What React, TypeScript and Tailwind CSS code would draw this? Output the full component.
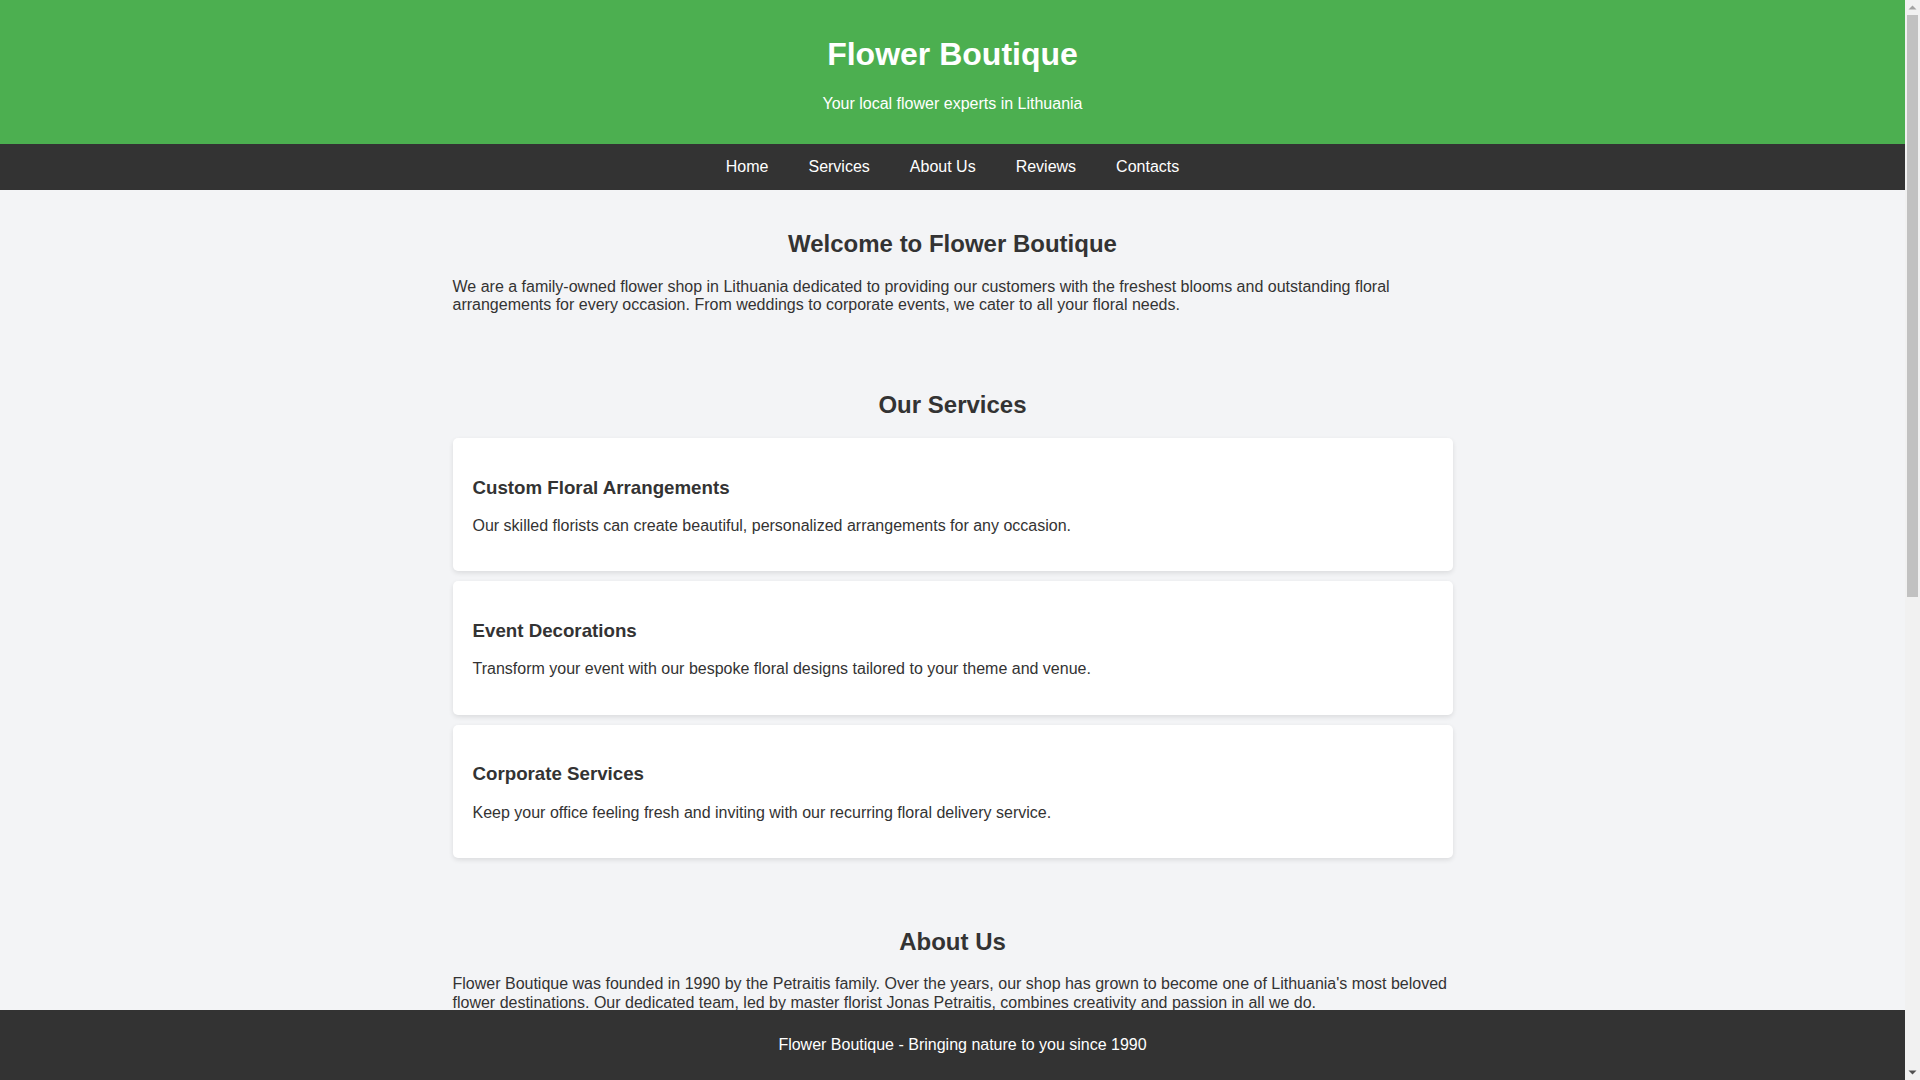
const services = [
  {
    title: "Custom Floral Arrangements",
    text: "Our skilled florists can create beautiful, personalized arrangements for any occasion.",
  },
  {
    title: "Event Decorations",
    text: "Transform your event with our bespoke floral designs tailored to your theme and venue.",
  },
  {
    title: "Corporate Services",
    text: "Keep your office feeling fresh and inviting with our recurring floral delivery service.",
  },
]

const reviews = [
  { text: "\u201cThe most beautiful wedding bouquet I could have wished for!\u201d", who: "- Ieva K." },
  { text: "\u201cFresh flowers every week for our office. Highly recommended.\u201d", who: "- Tomas P." },
]

const links = ["Home", "Services", "About Us", "Reviews", "Contacts"]

/* browser-style scrollbar drawn at the right edge */
function Scrollbar() {
  return (
    <div className="w-[15px] shrink-0 bg-[#f1f1f1] flex flex-col items-center">
      <svg width="15" height="15" viewBox="0 0 15 15" className="shrink-0">
        <path d="M3.5 9.5 L7.5 5.5 L11.5 9.5 Z" fill="#a3a3a3" />
      </svg>
      <div className="w-[11px] h-[582px] bg-[#c1c1c1]" />
      <div className="flex-1" />
      <svg width="15" height="15" viewBox="0 0 15 15" className="shrink-0">
        <path d="M3.5 5.5 L7.5 9.5 L11.5 5.5 Z" fill="#505050" />
      </svg>
    </div>
  )
}

export default function App() {
  return (
    <div className="h-screen flex overflow-hidden bg-[#f3f4f6] text-[#333] font-['Liberation_Sans',Arial,sans-serif] text-[16px] leading-[1.15]">
      <div className="relative flex-1 overflow-hidden">
        {/* Header */}
        <header className="bg-[#4caf50] text-white text-center py-[15px]">
          <h1 className="text-[32px] font-bold my-[21.44px]">Flower Boutique</h1>
          <p className="my-4">Your local flower experts in Lithuania</p>
        </header>

        {/* Nav */}
        <nav className="bg-[#333] flex justify-center">
          {links.map((l) => (
            <a key={l} href="#" className="text-white px-5 py-[14px]">
              {l}
            </a>
          ))}
        </nav>

        {/* Main */}
        <main className="max-w-[1000px] mx-auto pb-[90px]">
          <section className="py-5">
            <h2 className="text-[24px] font-bold text-center my-[19.92px]">Welcome to Flower Boutique</h2>
            <p className="my-4">
              We are a family-owned flower shop in Lithuania dedicated to providing our customers with the freshest
              blooms and outstanding floral arrangements for every occasion. From weddings to corporate events, we
              cater to all your floral needs.
            </p>
          </section>

          <section className="py-5">
            <h2 className="text-[24px] font-bold text-center my-[19.92px]">Our Services</h2>
            <div className="flex flex-col gap-[10px]">
              {services.map((s) => (
                <div key={s.title} className="bg-white rounded-[5px] shadow-[0_2px_5px_rgba(0,0,0,0.1)] p-5">
                  <h3 className="text-[18.72px] font-bold my-[18.72px]">{s.title}</h3>
                  <p className="my-4">{s.text}</p>
                </div>
              ))}
            </div>
            <div className="h-[10px]" />
          </section>

          <section className="py-5">
            <h2 className="text-[24px] font-bold text-center my-[19.92px]">About Us</h2>
            <p className="my-4">
              Flower Boutique was founded in 1990 by the Petraitis family. Over the years, our shop has grown to become
              one of Lithuania&apos;s most beloved flower destinations. Our dedicated team, led by master florist Jonas
              Petraitis, combines creativity and passion in all we do.
            </p>
          </section>

          <section className="py-5">
            <h2 className="text-[24px] font-bold text-center my-[19.92px]">Reviews</h2>
            <div className="flex flex-col gap-[10px]">
              {reviews.map((r) => (
                <div key={r.who} className="bg-white rounded-[5px] shadow-[0_2px_5px_rgba(0,0,0,0.1)] p-5">
                  <p className="my-4">{r.text}</p>
                  <p className="my-4">{r.who}</p>
                </div>
              ))}
            </div>
          </section>

          <section className="py-5">
            <h2 className="text-[24px] font-bold text-center my-[19.92px]">Contacts</h2>
            <p className="my-4">Address: Gedimino pr. 1, Vilnius, Lithuania</p>
            <p className="my-4">Phone: +370 600 00000</p>
            <p className="my-4">Email: info@flowerboutique.lt</p>
          </section>
        </main>

        {/* Footer */}
        <footer className="absolute bottom-0 left-0 right-0 bg-[#333] text-white text-center py-[10px] pl-[20px]">
          <p className="my-4">Flower Boutique - Bringing nature to you since 1990</p>
        </footer>
      </div>
      <Scrollbar />
    </div>
  )
}
